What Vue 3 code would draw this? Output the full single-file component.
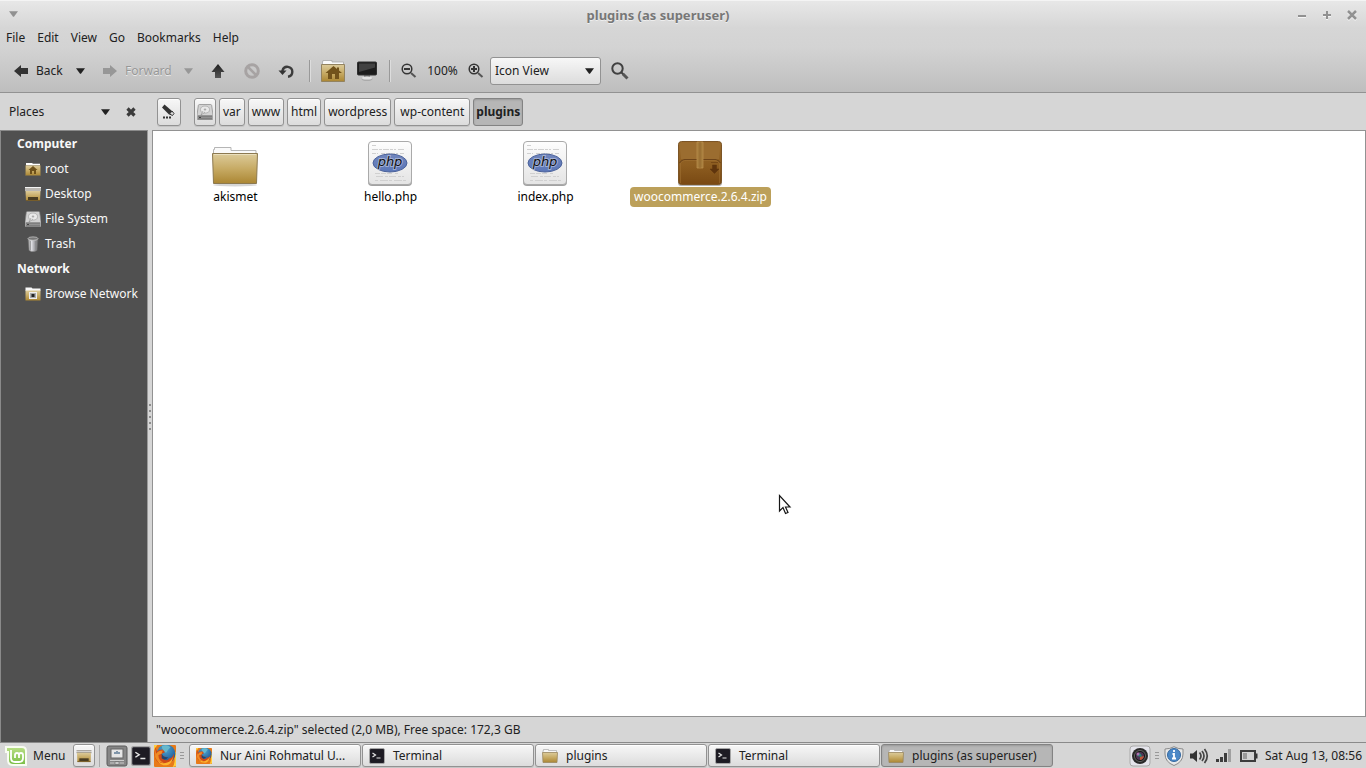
<script setup>
import { ref } from 'vue'

const view = ref('Icon View')
const menus = ['File', 'Edit', 'View', 'Go', 'Bookmarks', 'Help']
const crumbs = ['var', 'www', 'html', 'wordpress', 'wp-content', 'plugins']
const places = [
  { title: 'Computer', items: [
    { icon: 'home', label: 'root' },
    { icon: 'desktop', label: 'Desktop' },
    { icon: 'disk', label: 'File System' },
    { icon: 'trash', label: 'Trash' }
  ] },
  { title: 'Network', items: [{ icon: 'network', label: 'Browse Network' }] }
]
const files = [
  { icon: 'folder', name: 'akismet' },
  { icon: 'php', name: 'hello.php' },
  { icon: 'php', name: 'index.php' },
  { icon: 'package', name: 'woocommerce.2.6.4.zip', selected: true }
]
const tasks = [
  { icon: 'firefox', label: 'Nur Aini Rohmatul U...' },
  { icon: 'terminal', label: 'Terminal' },
  { icon: 'minifolder', label: 'plugins' },
  { icon: 'terminal', label: 'Terminal' },
  { icon: 'minifolder', label: 'plugins (as superuser)', active: true }
]
</script>

<template>
  <div class="screen">
    <svg class="defs" width="0" height="0" aria-hidden="true">
      <defs>
        <linearGradient id="gold" x1="0" y1="0" x2="0" y2="1"><stop offset="0" stop-color="#dccb9b" /><stop offset=".5" stop-color="#c7ab65" /><stop offset="1" stop-color="#ab8633" /></linearGradient>
        <linearGradient id="dark" x1="0" y1="0" x2="0" y2="1"><stop offset="0" stop-color="#1f1f1f" /><stop offset="1" stop-color="#565656" /></linearGradient>
        <linearGradient id="paper" x1="0" y1="0" x2="0" y2="1"><stop offset="0" stop-color="#fdfdfd" /><stop offset="1" stop-color="#e4e4e4" /></linearGradient>
        <linearGradient id="metal" x1="0" y1="0" x2="1" y2="0"><stop offset="0" stop-color="#8d8d8d" /><stop offset=".35" stop-color="#dedee2" /><stop offset=".65" stop-color="#a5a5a9" /><stop offset="1" stop-color="#707070" /></linearGradient>
        <linearGradient id="brown" x1="0" y1="0" x2="0" y2="1"><stop offset="0" stop-color="#9a6b2c" /><stop offset=".55" stop-color="#8d5d20" /><stop offset="1" stop-color="#794913" /></linearGradient>
        <linearGradient id="phpblue" x1="0" y1="0" x2="0" y2="1"><stop offset="0" stop-color="#7186bd" /><stop offset="1" stop-color="#5a76b8" /></linearGradient>
        <linearGradient id="mint" x1="0" y1="0" x2="0" y2="1"><stop offset="0" stop-color="#b9df86" /><stop offset="1" stop-color="#79bd45" /></linearGradient>
        <radialGradient id="globe" cx=".45" cy=".25" r=".8"><stop offset="0" stop-color="#4fa9d3" /><stop offset="1" stop-color="#174a8c" /></radialGradient>
      </defs>
      <symbol id="i-folder" viewBox="0 0 48 48">
        <ellipse cx="24" cy="46" rx="22" ry="1.500" fill="#000" opacity=".16" />
        <path d="M2.500 16V10.500h1V8.500h16.500v3h25V16z" fill="#fafafa" stroke="#b5b5b5" />
        <path d="M1.500 14.500h45L45.500 44.500h-43z" fill="url(#gold)" stroke="#8c7950" />
        <path d="M3 15.500h42" stroke="#eadfbe" />
      </symbol>
      <symbol id="i-php" viewBox="0 0 48 48">
        <rect x="2" y="3.500" width="44" height="43.500" rx="4" fill="#555" opacity=".55" />
        <rect x="2.500" y="2.500" width="43" height="43" rx="3.500" fill="url(#paper)" stroke="#aaa" />
        <g stroke="#d0d0d0" stroke-width="1" fill="none">
          <path d="M6 6.500h4" /><path d="M6 10.500h24m2 0h7" stroke-dasharray="6 1 3 1" /><path d="M6 14.500h6m3 0h17m2 0h4" stroke-dasharray="4 1" />
          <path d="M9 34.500h18m2 0h3" stroke-dasharray="5 1" /><path d="M10 37.500h28" stroke-dasharray="7 2 3 1" /><path d="M9 41.500h31" stroke-dasharray="3 2 8 1" />
        </g>
        <ellipse cx="24" cy="24" rx="17" ry="9" fill="url(#phpblue)" stroke="#4a619a" />
        <text x="24" y="27" text-anchor="middle" class="phptext">php</text>
      </symbol>
      <symbol id="i-package" viewBox="0 0 48 48">
        <rect x="2" y="3.500" width="44" height="43.500" rx="3" fill="#000" opacity=".3" />
        <rect x="2.500" y="2.500" width="43" height="43" rx="3" fill="url(#brown)" stroke="#7c5526" />
        <path d="M3.500 5q0-1.500 2-1.500h37q2 0 2 1.500L43 20H5z" fill="#9b6d30" />
        <path d="M3.500 24q2-3 5-3.500h31q3 .5 5 3.500" fill="none" stroke="#6d4419" stroke-width="1.200" />
        <path d="M4.500 44V24q2-2 4-2.500h31q2 .5 4 2.500V44" fill="none" stroke="#9f7032" stroke-width=".6" />
        <path d="M21 3h6v26h-6z" fill="#a37a3a" stroke="#bd9450" stroke-width=".7" /><path d="M24 3v26" stroke="#93692f" />
        <path d="M35 23.500h7M36.500 26h4v4h2.500L38.500 34.500 34 30h2.500z" fill="#5e340d" stroke="#5e340d" stroke-width=".5" />
      </symbol>
      <symbol id="i-minifolder" viewBox="0 0 16 16">
        <path d="M1 4V2.500h.5v-1h5v1h8V5H1z" fill="#f7f7f7" stroke="#aaa" stroke-width=".7" /><path d="M.5 4.500h15L15 14.500H1z" fill="url(#gold)" stroke="#9b8860" stroke-width=".8" />
      </symbol>
      <symbol id="i-home" viewBox="0 0 16 16">
        <path d="M1 4V2h6l1 .7h7V5H1z" fill="#fff" /><path d="M.5 4.500h15v10H.5z" fill="url(#gold)" stroke="#80704b" stroke-width=".5" />
        <path d="M8 5 3.500 9H5v4h2v-3h2v3h2V9h1.500z" fill="#6d501a" />
      </symbol>
      <symbol id="i-bighome" viewBox="0 0 24 24">
        <path d="M1.500 8V2.500H2V1.500h9v1.500h11.500v5z" fill="#fafafa" stroke="#aaa" stroke-width=".8" /><path d="M.5 5.500h23v17H.5z" fill="url(#gold)" stroke="#93835f" />
        <path d="M12.500 7 4.500 14H7v6h4v-5h3v5h4v-6h3L18 11.500V8.500h-2V10z" fill="#72531b" />
      </symbol>
      <symbol id="i-desktop" viewBox="0 0 16 16">
        <path d="M0 1h16v4H0z" fill="#f4f4f4" /><path d="M0 3h16M0 5h16" stroke="#655e51" stroke-width=".8" /><path d="M.5 5h15l-.5 10H1z" fill="url(#gold)" /><path d="M3 11h10v3H3z" fill="#4a3d22" /><path d="M1 14.500h14" stroke="#765d2b" />
      </symbol>
      <symbol id="i-disk" viewBox="0 0 16 16">
        <path d="M2.500.5h11q1 0 1.200 1L16 11v4q0 .7-.7.700H.7Q0 15.700 0 15v-4L1.300 1.500Q1.500.5 2.500.5z" fill="#d3d3d3" stroke="#858585" stroke-width=".7" />
        <ellipse cx="8" cy="5.600" rx="4.500" ry="3.500" fill="#e9e9e9" stroke="#9b9b9b" stroke-width=".6" /><ellipse cx="8" cy="5.500" rx="1.300" ry="1" fill="#aaa" />
        <path d="m6 7-2 4 4-3" fill="#eee" stroke="#888" stroke-width=".6" /><path d="M.5 11.500h15v3.500H.5z" fill="#929292" /><path d="M1 12h14M1 15h14" stroke="#555" stroke-width=".6" /><path d="M2 13.500h2" stroke="#444" />
      </symbol>
      <symbol id="i-trash" viewBox="0 0 16 16">
        <path d="M3 2.500h10l-1 12Q8 17 4 14.500z" fill="url(#metal)" stroke="#727272" stroke-width=".5" /><ellipse cx="8" cy="2.600" rx="5" ry="1.700" fill="#777" stroke="#c8c8c8" stroke-width=".8" /><path d="M5.500 5v9M10.500 5v9" stroke="#868686" stroke-width=".6" />
      </symbol>
      <symbol id="i-network" viewBox="0 0 16 16">
        <path d="M.5 4V1.500h6l1 1h8V5H.5z" fill="#f9f9f9" /><path d="M.5 4.500h15v10H.5z" fill="url(#gold)" /><path d="M4 6h8v7H4z" fill="#eee" /><path d="M5 7h6v5H5z" fill="#aaa" /><path d="M6.500 8h3v3h-3z" fill="#242424" />
      </symbol>
      <symbol id="i-terminal" viewBox="0 0 16 16">
        <rect x=".5" y=".5" width="15" height="15" rx="1.500" fill="#25222d" stroke="#a5a5a5" /><rect x="1.500" y="1.500" width="13" height="13" fill="#1d1b23" /><path d="m3.500 5 3 2-3 2M7.500 10h4" fill="none" stroke="#e6e6e6" stroke-width="1.200" />
      </symbol>
      <symbol id="i-firefox" viewBox="0 0 20 20">
        <rect width="20" height="20" rx="1" fill="#e87a18" /><path d="M0 0h3L1 3 0 7zM20 6v13l-3 1q3-5 1-11z" fill="#ffcf3d" />
        <circle cx="11" cy="8" r="8.500" fill="url(#globe)" /><path d="M7 1q5-2 8 1l-2 2-2 3-3-2z" fill="#67b8cc" />
        <path d="M1 2q-2 10 3 14 6 4 11 0 4-3 3-8-1 4-4 4-2 3-5 1l2-2Q7 10 7 8l3-1.500L8 4Q4 4 3 6z" fill="#cf4a17" />
        <path d="M1 3l1 5q2-3 6-3l-1 3-3 1q0 5 5 7-6 1-8-5z" fill="#ef8b25" />
        <path d="M3 14q4 4 9 2 4-1 5-5 0 5-4 7-6 2-10-4z" fill="#fdb22e" /><path d="M7 8q2 4 6 3-3 4-6 1z" fill="#23446e" />
      </symbol>
      <symbol id="i-caret" viewBox="0 0 10 6"><path d="M0 0h10L5.500 6h-1z" fill="currentColor" /></symbol>
      <symbol id="i-left" viewBox="0 0 14 12"><path d="M0 6 7 0v3h7v6H7v3z" fill="currentColor" /></symbol>
    </svg>

    <header class="chrome">
      <div class="titlebar">
        <button class="plain winmenu" aria-label="Window menu"><svg width="9" height="6"><use href="#i-caret" /></svg></button>
        <h1>plugins (as superuser)</h1>
        <div class="wincontrols">
          <button class="plain" aria-label="Minimize"><svg width="9" height="9"><path d="M0 5h8" stroke="currentColor" stroke-width="2" /></svg></button>
          <button class="plain" aria-label="Maximize"><svg width="9" height="9"><path d="M0 4h8M4 0v8" stroke="currentColor" stroke-width="2" /></svg></button>
          <button class="plain" aria-label="Close"><svg width="9" height="9"><path d="m0 0 8 8m0-8-8 8" stroke="currentColor" stroke-width="2.500" /></svg></button>
        </div>
      </div>
      <nav class="menubar"><button v-for="m in menus" :key="m" class="plain">{{ m }}</button></nav>
      <div class="toolbar">
        <button class="plain back"><svg width="14" height="12" color="#333"><use href="#i-left" /></svg>Back</button>
        <button class="plain drop" aria-label="Back history"><svg width="9" height="6"><use href="#i-caret" /></svg></button>
        <button class="plain forward" disabled><svg width="14" height="12" viewBox="0 0 14 12"><path d="M14 6 7 0v3H0v6h7v3z" fill="currentColor" /></svg>Forward</button>
        <button class="plain drop" disabled aria-label="Forward history"><svg width="9" height="6"><use href="#i-caret" /></svg></button>
        <button class="plain tool" aria-label="Up"><svg width="14" height="14"><path d="m7 0 6.500 8H10v6H4V8H.5z" fill="url(#dark)" /></svg></button>
        <button class="plain tool" disabled aria-label="Stop"><svg width="16" height="16" fill="none" stroke="#a7a3a3" stroke-width="3"><circle cx="8" cy="8" r="6.300" /><path d="m4 4 8 8" stroke-width="2.500" /></svg></button>
        <button class="plain tool" aria-label="Reload"><svg width="17" height="16"><path d="M4.500 9V7.500A5 5 0 1 1 10 13.800" fill="none" stroke="#3c3c3c" stroke-width="2.400" /><path d="M.5 7.500h8L4.500 12z" fill="#333" /></svg></button>
        <span class="sep first"></span>
        <button class="plain home" aria-label="Home"><svg width="24" height="24"><use href="#i-bighome" /></svg></button>
        <button class="plain computer" aria-label="Computer"><svg width="22" height="22"><ellipse cx="11" cy="19" rx="5.500" ry="2" fill="#aaa" /><path d="M8 15h6v3H8z" fill="#888" /><ellipse cx="11" cy="18" rx="5" ry="1.500" fill="#e2e2e2" /><rect x="1.500" y="2" width="19" height="13" rx="1" fill="#1c1c1c" stroke="#303030" /><path d="M3 3.500h16v4L3 12z" fill="#414141" /></svg></button>
        <span class="sep second"></span>
        <button class="plain zoom" aria-label="Zoom out"><svg width="16" height="16" fill="none" stroke="#353535"><circle cx="6" cy="6" r="4.800" stroke-width="1.500" /><path d="M3 6h6" stroke-width="2" /><path d="m10 10 4.500 4" stroke="#555" stroke-width="2" /></svg></button>
        <span class="percent">100%</span>
        <button class="plain zoom" aria-label="Zoom in"><svg width="16" height="16" fill="none" stroke="#353535"><circle cx="6" cy="6" r="4.800" stroke-width="1.500" /><path d="M3 6h6M6 3v6" stroke-width="2" /><path d="m10 10 4.500 4" stroke="#555" stroke-width="2" /></svg></button>
        <div class="viewpick"><select v-model="view" aria-label="View"><option>Icon View</option><option>List View</option><option>Compact View</option></select><svg width="9" height="6"><use href="#i-caret" /></svg></div>
        <button class="plain search" aria-label="Search"><svg width="18" height="18" fill="none" stroke="#404040"><circle cx="6.500" cy="6.500" r="5.200" stroke-width="2" /><path d="m10.500 10.500 2 2" stroke-width="2" /><path d="m12 12 4.500 4.500" stroke="#555" stroke-width="3" /></svg></button>
      </div>
    </header>

    <div class="location">
      <div class="placeshead"><button class="plain">Places<svg width="9" height="6"><use href="#i-caret" /></svg></button><button class="plain closeside" aria-label="Close places"><svg width="10" height="10"><path d="m1.500 1.500 7 7m0-7-7 7" stroke="#3b3b3b" stroke-width="3.200" /></svg></button></div>
      <button class="raised edit" aria-label="Edit location"><svg width="14" height="15"><path d="m2.500.500 8 7v3H7L0 3.500z" fill="#333" /><path d="m10 7 2 2.500-1.500 2L7.500 10z" fill="#ddd" stroke="#333" /><path d="M1 13.500h8" stroke="#333" stroke-width="2" stroke-dasharray="2 1" /></svg></button>
      <nav class="crumbs">
        <button class="raised root" aria-label="File System"><svg width="16" height="16"><use href="#i-disk" /></svg></button>
        <button v-for="c in crumbs" :key="c" :class="['raised', c, { pressed: c === 'plugins' }]">{{ c }}</button>
      </nav>
    </div>

    <div class="body">
      <aside>
        <section v-for="g in places" :key="g.title">
          <h2>{{ g.title }}</h2>
          <a v-for="p in g.items" :key="p.label" href="#"><svg width="16" height="16"><use :href="'#i-' + p.icon" /></svg>{{ p.label }}</a>
        </section>
      </aside>
      <div class="splitter"><i v-for="n in 5" :key="n"></i></div>
      <main>
        <div class="files">
          <button v-for="f in files" :key="f.name" :class="['plain', 'file', { selected: f.selected }]"><svg width="48" height="48"><use :href="'#i-' + f.icon" /></svg><span>{{ f.name }}</span></button>
        </div>
        <footer>"woocommerce.2.6.4.zip" selected (2,0 MB), Free space: 172,3 GB</footer>
      </main>
    </div>

    <div class="taskbar">
      <button class="plain start"><svg width="22" height="20"><path d="M1 1h16q4 0 4 4v14H8q-5 0-5-5V6H1z" fill="url(#mint)" stroke="#f8fcf1" stroke-width="2" /><path d="M6 4v8q0 4 4 4h4q4 0 4-4V9q0-2-2-2t-2 2v3M10 12V9q0-2 2-2t2 2" fill="none" stroke="#fff" stroke-width="1.800" /></svg>Menu</button>
      <button class="raised show" aria-label="Show desktop"><svg width="16" height="15"><use href="#i-desktop" /></svg></button>
      <span class="tasksep"></span>
      <div class="launchers">
        <button class="plain" aria-label="Files"><svg width="22" height="22"><rect x="1" y="1" width="20" height="20" rx="2" fill="#868686" stroke="#5b5b5b" /><rect x="5" y="4" width="12" height="9" fill="#e6e6e6" stroke="#666" /><path d="M8 9h6V7h-2V6h-2v1H8z" fill="#8196aa" /><path d="M4 15.500h14M4 18h14" stroke="#ccc" /><path d="M9 17h4v2H9z" fill="#eee" stroke="#555" stroke-width=".5" /></svg></button>
        <button class="plain" aria-label="Terminal"><svg width="20" height="20"><use href="#i-terminal" /></svg></button>
        <button class="plain" aria-label="Firefox"><svg width="22" height="22"><use href="#i-firefox" /></svg></button>
      </div>
      <span class="grip"></span>
      <div class="tasks">
        <button v-for="(t, n) in tasks" :key="n" :class="['raised', { pressed: t.active }]"><svg width="16" height="16"><use :href="'#i-' + t.icon" /></svg>{{ t.label }}</button>
      </div>
      <div class="tray">
        <svg width="22" height="22"><rect x="1" y="1" width="20" height="20" rx="3" fill="#e4e4eb" stroke="#aaa" /><circle cx="11" cy="11" r="8" fill="#292929" /><circle cx="11" cy="11" r="5.500" fill="#111" stroke="#666" /><circle cx="11" cy="11" r="4" fill="#503454" /><path d="M8 11q1-4 4-2l1 3z" fill="#268678" /><path d="m11 12 4-1q-1 4-4 4z" fill="#bd5637" /><circle cx="9" cy="9" r="1.500" fill="#ae71b2" /></svg>
        <span class="grip"></span>
        <svg class="shield" width="20" height="20"><path d="M10 .700Q14 3 19 3v5q0 8-9 11.500Q1 16 1 8V3q5 0 9-2.300z" fill="#e8e8e8" stroke="#8a8a8a" /><circle cx="10" cy="9" r="6.500" fill="#4b88c6" stroke="#3568a0" /><path d="M10 4v2m-1.500 2H10v4M8 12.500h4" stroke="#fff" stroke-width="1.800" fill="none" /></svg>
        <svg class="sound" width="20" height="16"><path d="M1 5.500h3L8 2v12l-4-3.500H1z" fill="#333" /><path d="M10.500 4.500q3 3.500 0 7M13 3q4 5 0 10M15.500 1q5.500 7 0 14" fill="none" stroke="#454545" stroke-width="1.700" /></svg>
        <svg class="signal" width="16" height="16"><path d="M0 11h3v3H0zM4 9h3v5H4zM8 5h3v9H8z" fill="#3d3d3d" /><path d="M12 1h3v13h-3z" fill="#a0a0a0" /></svg>
        <svg class="battery" width="18" height="12"><rect x="1" y="1" width="14" height="10" fill="#d2d2d2" stroke="#3c3c3c" stroke-width="2" /><path d="M3 3h4v6H3z" fill="#999" /><path d="M15.500 3.500h2v5h-2z" fill="#333" /></svg>
        <time>Sat Aug 13, 08:56</time>
      </div>
    </div>
    <svg class="cursor" width="14" height="22" aria-hidden="true"><path d="M1.500 1.500v15.500l3.500-3.500 2.500 6 2.500-1-2.500-5.500h4.500z" fill="#fff" stroke="#161616" stroke-width="1.200" /></svg>
  </div>
</template>

<style>
html, body, #app { height: 100%; }
body { margin: 0; overflow: hidden; }
</style>

<style scoped>
* { box-sizing: border-box; }
.screen { position: relative; display: flex; flex-direction: column; height: 100%; min-height: 500px; background: #d6d6d6; color: #212121; font: 12px/20px "Noto Sans", "Open Sans", sans-serif; }
.defs { position: absolute; }
svg { flex: none; display: block; overflow: visible; }
button, select { font: inherit; color: inherit; margin: 0; }
button { display: flex; align-items: center; padding: 0; white-space: nowrap; }
.plain { border: 0; background: none; }
.phptext { font: italic 500 13px "DejaVu Sans", sans-serif; fill: #111; stroke: #fff; stroke-width: 2px; paint-order: stroke; stroke-opacity: .4; }

.chrome { border-bottom: 1px solid #929292; background: linear-gradient(#e8e8e8, #d6d6d6 28px, #d3d3d3 48px, #bebebe); box-shadow: inset 0 1px #f4f4f4; }
.titlebar { display: flex; align-items: center; height: 28px; color: #919191; }
.winmenu { width: 25px; padding-left: 9px; }
.titlebar h1 { flex: 1; margin: 0; padding-top: 2px; text-align: center; font-size: 13px; line-height: 20px; font-weight: 700; color: #777; text-shadow: 0 1px #eee; }
.wincontrols { display: flex; gap: 16px; width: 75px; padding: 2px 0 0 7px; }
.wincontrols svg { filter: drop-shadow(0 1px 0 #f5f5f5); }
.menubar { display: flex; height: 20px; }
.menubar button { padding: 0 6px; }
.toolbar { display: flex; align-items: center; height: 44px; padding-top: 2px; }
.toolbar button:disabled { color: #979797; text-shadow: 0 1px #eaeaea; }
.back { width: 70px; padding-left: 14px; gap: 8px; }
.drop { width: 21px; justify-content: center; }
.forward { width: 85px; padding-left: 12px; gap: 8px; }
.toolbar .forward + .drop { width: 25px; }
.tool { width: 34px; justify-content: center; }
.sep { width: 1px; height: 22px; background: #999; box-shadow: 1px 0 #ddd; }
.sep.first { margin: 0 11px 0 6px; }
.home { width: 35px; }
.computer { width: 33px; }
.sep.second { margin-right: 11px; }
.zoom { width: 22px; }
.percent { width: 45px; text-align: center; padding-right: 6px; }
.viewpick { position: relative; width: 111px; height: 28px; }
select { width: 100%; height: 28px; padding: 0 20px 0 4px; appearance: none; border: 1px solid #929292; border-radius: 3px; background: linear-gradient(#f7f7f7, #dcdcdc); }
.viewpick svg { position: absolute; right: 7px; top: 11px; pointer-events: none; }
.search { margin-left: 10px; }

.location { display: flex; align-items: center; height: 37px; }
.placeshead { display: flex; width: 157px; padding-left: 9px; }
.placeshead button:first-child { width: 101px; justify-content: space-between; }
.closeside { margin-left: 16px; }
.raised { justify-content: center; height: 28px; border: 1px solid #929292; border-radius: 3px; background: linear-gradient(#f7f7f7, #dcdcdc); box-shadow: inset 0 1px #fff, 0 1px #c4c4c4; }
.pressed { background: #b6b6b6; border-color: #838383; box-shadow: inset 0 1px 2px #999; }
.edit { width: 24px; }
.crumbs { display: flex; gap: 3px; margin-left: 13px; }
.crumbs .raised { padding: 0 3px; }
.crumbs .root { padding: 0 2px; }
.crumbs .wp-content { padding: 0 5px; }
.crumbs .pressed { padding: 0 2px; font-weight: 700; }

.body { display: flex; flex: 1; min-height: 0; border-bottom: 1px solid #8a8a8a; }
aside { width: 148px; border: 1px solid #8a8a8a; border-bottom: 0; border-right-color: #9a9a9a; background: #505050; color: #f8f8f8; }
aside h2 { margin: 0; padding-left: 16px; font-size: 12px; line-height: 25px; }
aside a { display: flex; align-items: center; gap: 4px; height: 25px; padding-left: 24px; color: inherit; text-decoration: none; white-space: nowrap; }
.splitter { display: flex; flex-direction: column; align-items: center; justify-content: center; gap: 4px; width: 4px; padding-bottom: 38px; }
.splitter i { width: 2px; height: 2px; background: #8d8d8d; }
main { flex: 1; display: flex; flex-direction: column; min-width: 0; }
.files { flex: 1; display: flex; flex-wrap: wrap; align-content: flex-start; padding: 8px 5px; border: 1px solid #929292; background: #fff; color: #000; }
.file { flex-direction: column; width: 155px; }
.file svg { margin-right: 2px; }
.file span { padding: 0 4px; border-radius: 4px; }
.selected span { background: #bca05a; color: #fff; }
footer { height: 25px; padding: 3px 4px 2px; }

.taskbar { display: flex; align-items: center; height: 25px; }
.start { width: 73px; padding-left: 5px; gap: 6px; }
.taskbar .raised { height: 23px; }
.show { width: 22px; }
.tasksep { width: 1px; height: 22px; margin: 0 6px 0 4px; background: #aaa; }
.launchers { display: flex; align-items: center; gap: 3px; }
.grip { width: 4px; height: 8px; background: repeating-linear-gradient(#999 0 1px, transparent 1px 3px); }
.launchers + .grip { margin: 0 5px 0 4px; }
.tasks { display: flex; flex: 0 1 864px; gap: 1px; min-width: 0; }
.tasks .raised { flex: 1; min-width: 0; justify-content: flex-start; padding-left: 6px; gap: 8px; overflow: hidden; }
.tray { display: flex; align-items: center; margin-left: auto; padding-right: 4px; white-space: nowrap; }
.tray .grip { margin: 0 5px 0 4px; }
.sound { margin-left: 5px; }
.signal { margin-left: 7px; }
.battery { margin: 0 7px 0 8px; }
.cursor { position: absolute; left: 778px; top: 494px; pointer-events: none; }
</style>
